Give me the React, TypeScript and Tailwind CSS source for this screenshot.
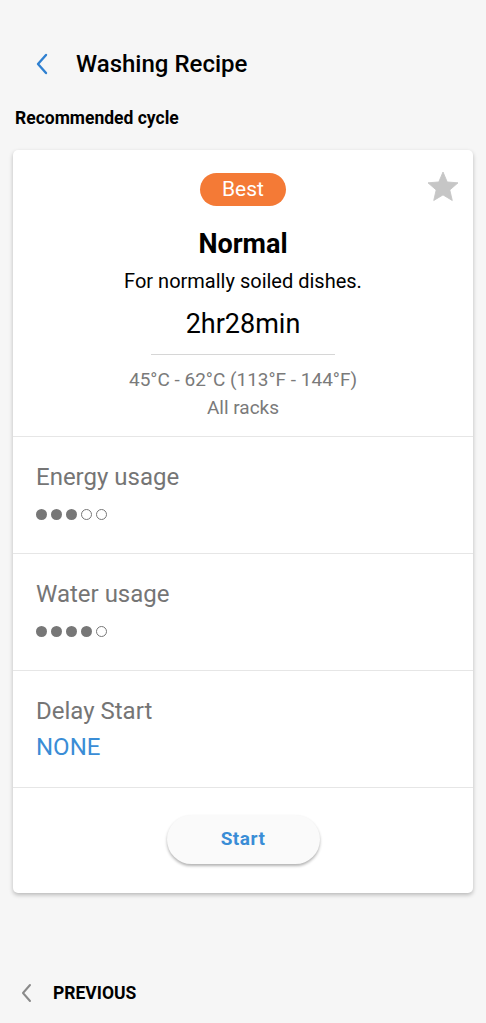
import React from 'react';

const font = { fontFamily: 'Roboto, "Noto Sans", sans-serif' };

const Dots = ({ filled }: { filled: number }) => (
  <div className="flex items-center gap-[4px] mt-[18px]">
    {[0, 1, 2, 3, 4].map((i) =>
      i < filled ? (
        <span key={i} className="w-[11px] h-[11px] rounded-full bg-[#777777]" />
      ) : (
        <span key={i} className="w-[11px] h-[11px] rounded-full border border-[#777777]" />
      )
    )}
  </div>
);

const Section = ({ label, children }: { label: string; children: React.ReactNode }) => (
  <div className="border-t border-[#e6e6e6] h-[117px] px-[23px] pt-[26px]">
    <div className="text-[24px] leading-[28px] text-[#757575]">{label}</div>
    {children}
  </div>
);

const App = () => {
  return (
    <div className="w-[486px] h-[1023px] bg-[#f6f6f6] flex flex-col" style={font}>
      <div className="flex items-center h-[64px] mt-[32px] pl-[34px]">
        <svg width="18" height="22" viewBox="0 0 18 22" className="mr-[24px]">
          <path d="M12 2 L4 11 L12 20" fill="none" stroke="#2f80d1" strokeWidth="2.4" strokeLinecap="round" strokeLinejoin="round" />
        </svg>
        <span className="text-[24px] font-medium text-black">Washing Recipe</span>
      </div>
      <div className="px-[15px] mt-[10px] text-[17.5px] leading-[24px] font-bold text-black">Recommended cycle</div>

      <div className="mx-[13px] mt-[20px] bg-white rounded-[5px] shadow-[0_2px_4px_rgba(0,0,0,0.25)]">
        <div className="relative flex flex-col items-center pt-[23px] pb-[14px]">
          <svg width="36" height="36" viewBox="0 0 24 24" className="absolute right-[12px] top-[19px]">
            <path
              d="M12 17.27L18.18 21l-1.64-7.03L22 9.24l-7.19-.61L12 2 9.19 8.63 2 9.24l5.46 4.73L5.82 21z"
              fill="#c6c6c6"
              stroke="#c6c6c6"
              strokeWidth="0.6"
              strokeLinejoin="round"
            />
          </svg>
          <div className="w-[86px] h-[33px] rounded-full bg-[#f47a36] text-white text-[21px] flex items-center justify-center">Best</div>
          <div className="mt-[22px] text-[27px] leading-[32px] font-bold text-black">Normal</div>
          <div className="mt-[9px] text-[20px] leading-[24px] text-black">For normally soiled dishes.</div>
          <div className="mt-[15px] text-[27px] leading-[32px] text-black">2hr28min</div>
          <div className="mt-[14px] w-[184px] h-px bg-[#d6d6d6]" />
          <div className="mt-[11px] text-[19px] leading-[28px] text-[#7a7a7a]">45°C - 62°C (113°F - 144°F)</div>
          <div className="text-[19px] leading-[28px] text-[#7a7a7a]">All racks</div>
        </div>

        <Section label="Energy usage">
          <Dots filled={3} />
        </Section>
        <Section label="Water usage">
          <Dots filled={4} />
        </Section>
        <Section label="Delay Start">
          <div className="mt-[8px] text-[24px] leading-[28px] text-[#3a8dd6]">NONE</div>
        </Section>

        <div className="border-t border-[#e6e6e6] flex justify-center pt-[27px] pb-[29px]">
          <button className="w-[153px] h-[49px] rounded-full bg-[#fafafa] shadow-[0_2px_3px_rgba(0,0,0,0.3)] text-[19px] font-bold tracking-[0.5px] text-[#3a8dd6]">
            Start
          </button>
        </div>
      </div>

      <div className="mt-auto mb-[15px] flex items-center pl-[20px] h-[30px]">
        <svg width="14" height="20" viewBox="0 0 14 20" className="mr-[19px]">
          <path d="M10 2 L3 10 L10 18" fill="none" stroke="#8a8a8a" strokeWidth="2" strokeLinecap="round" strokeLinejoin="round" />
        </svg>
        <span className="text-[17.5px] font-bold text-black">PREVIOUS</span>
      </div>
    </div>
  );
};

export default App;
